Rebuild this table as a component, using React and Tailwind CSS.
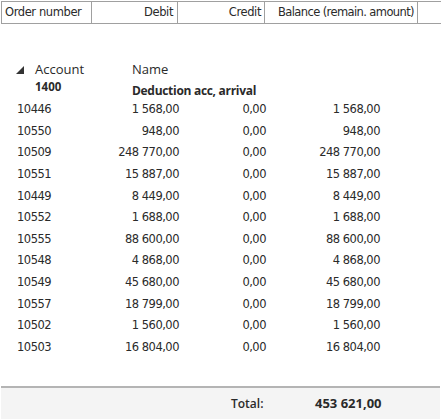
import React from "react";

const rows = [
    ["10446", "1 568,00", "0,00", "1 568,00"],
    ["10550", "948,00", "0,00", "948,00"],
    ["10509", "248 770,00", "0,00", "248 770,00"],
    ["10551", "15 887,00", "0,00", "15 887,00"],
    ["10449", "8 449,00", "0,00", "8 449,00"],
    ["10552", "1 688,00", "0,00", "1 688,00"],
    ["10555", "88 600,00", "0,00", "88 600,00"],
    ["10548", "4 868,00", "0,00", "4 868,00"],
    ["10549", "45 680,00", "0,00", "45 680,00"],
    ["10557", "18 799,00", "0,00", "18 799,00"],
    ["10502", "1 560,00", "0,00", "1 560,00"],
    ["10503", "16 804,00", "0,00", "16 804,00"],
];

const App = () => {
    return (
        <div className="w-[441px] h-[420px] bg-white text-[#2a2a2a] font-['DejaVu_Sans',sans-serif] flex flex-col overflow-hidden">
            {/* Column header */}
            <div className="mt-[1px] ml-[1px] flex h-[23px] border-y border-l border-[#a0a0a0] text-[11.5px] tracking-[-0.4px]">
                <div className="w-[90px] border-r border-[#a0a0a0] px-[3px] leading-[21px]">Order number</div>
                <div className="w-[86px] border-r border-[#a0a0a0] px-[4px] text-right leading-[21px]">Debit</div>
                <div className="w-[87px] border-r border-[#a0a0a0] px-[3px] text-right leading-[21px]">Credit</div>
                <div className="w-[153px] border-r border-[#a0a0a0] px-[3px] text-right leading-[21px] whitespace-nowrap tracking-[-0.6px]">Balance (remain. amount)</div>
                <div className="flex-1" />
            </div>

            {/* Group header */}
            <div className="mt-[36px] flex font-['Open_Sans',sans-serif] text-[13px]">
                <div className="w-[132px] pl-[16px]">
                    <div className="flex items-center h-[18px] leading-[18px]">
                        <svg width="8" height="8" viewBox="0 0 8 8" className="mr-[11px] mt-[1px]">
                            <polygon points="8,0 8,8 0,8" fill="#333" />
                        </svg>
                        <span>Account</span>
                    </div>
                    <div className="mt-[2px] pl-[19px] text-[11.5px] font-bold leading-[13px]">1400</div>
                </div>
                <div className="flex flex-col">
                    <div className="leading-[18px]">Name</div>
                    <div className="mt-[5px] text-[12px] font-bold leading-[16px] tracking-[-0.3px]">Deduction acc, arrival</div>
                </div>
            </div>

            {/* Rows */}
            <div className="text-[11.5px] tracking-[-0.5px]">
                {rows.map((r) => (
                    <div key={r[0]} className="flex h-[21.6px] items-center">
                        <div className="w-[110px] pl-[17px]">{r[0]}</div>
                        <div className="w-[69px] text-right">{r[1]}</div>
                        <div className="w-[87px] text-right">{r[2]}</div>
                        <div className="w-[114px] text-right">{r[3]}</div>
                    </div>
                ))}
            </div>

            <div className="flex-1" />

            {/* Footer total */}
            <div className="mx-[1px] mb-[1px] h-[33px] border-t-2 border-[#b4b4b4] bg-[#f4f4f4] flex items-center font-['Open_Sans',sans-serif] text-[12px]">
                <div className="w-[230px]" />
                <div className="w-[84px] font-semibold">Total:</div>
                <div className="text-[13px] font-bold">453 621,00</div>
            </div>
        </div>
    );
};

export default App;
